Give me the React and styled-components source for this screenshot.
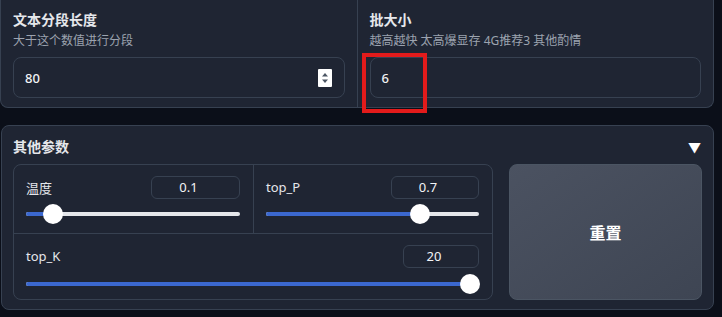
import React from 'react';
import styled, { createGlobalStyle } from 'styled-components';

const GlobalStyle = createGlobalStyle`
  html, body {
    margin: 0;
    padding: 0;
    background: #0b0f19;
  }
  body {
    font-family: "Noto Sans", "Noto Sans CJK SC", sans-serif;
    color: #e5e7eb;
  }
`;

const Page = styled.div`
  position: relative;
  width: 722px;
  height: 317px;
  overflow: hidden;
  display: flex;
  flex-direction: column;
  gap: 17px;
`;

const TopRow = styled.div`
  display: flex;
  width: 714px;
  height: 108px;
  box-sizing: border-box;
  background: #1f2533;
  border: 1px solid #374151;
  border-top: none;
  border-radius: 0 0 8px 8px;
  overflow: hidden;
`;

const Field = styled.div`
  flex: 1;
  padding: 10px 12px 0 12px;
  box-sizing: border-box;
  border-left: ${(p) => (p.$first ? 'none' : '1px solid #374151')};
`;

const Title = styled.div`
  font-size: 14px;
  font-weight: 600;
  line-height: 20px;
  color: #e5e7eb;
`;

const Hint = styled.div`
  font-size: 12px;
  line-height: 17px;
  color: #9ca3af;
  margin-top: 2px;
`;

const InputBox = styled.div`
  margin-top: 8px;
  height: 41px;
  box-sizing: border-box;
  border: 1px solid #374151;
  border-radius: 8px;
  display: flex;
  align-items: center;
  justify-content: space-between;
  padding: 0 12px 0 11px;
  font-size: 13px;
  font-weight: 500;
  color: #f3f4f6;
`;

const Spinner = styled.svg`
  display: block;
`;

const Panel = styled.div`
  margin-left: 1px;
  width: 713px;
  height: 185px;
  box-sizing: border-box;
  background: #1f2533;
  border: 1px solid #374151;
  border-radius: 8px;
  padding: 10px 11px 9px 11px;
  display: flex;
  flex-direction: column;
  gap: 8px;
`;

const PanelHead = styled.div`
  display: flex;
  justify-content: space-between;
  align-items: center;
  height: 20px;
  font-size: 14px;
  font-weight: 600;
  color: #e5e7eb;
`;

const Caret = styled.span`
  font-size: 13px;
  color: #ffffff;
  margin-right: 1px;
`;

const PanelBody = styled.div`
  display: flex;
  gap: 16px;
  flex: 1;
`;

const Group = styled.div`
  width: 480px;
  box-sizing: border-box;
  border: 1px solid #374151;
  border-radius: 8px;
  display: grid;
  grid-template-columns: 239px 1fr;
  grid-template-rows: 68px 1fr;
  overflow: hidden;
`;

const Cell = styled.div`
  grid-column: ${(p) => (p.$wide ? '1 / span 2' : 'auto')};
  padding: 10px 13px 0 12px;
  border-left: ${(p) => (p.$divide ? '1px solid #374151' : 'none')};
  border-top: ${(p) => (p.$wide ? '1px solid #374151' : 'none')};
  box-sizing: border-box;
`;

const CellHead = styled.div`
  display: flex;
  justify-content: space-between;
  align-items: center;
  height: 24px;
`;

const Label = styled.span`
  font-size: 13px;
  color: #e5e7eb;
`;

const NumBox = styled.div`
  width: ${(p) => p.$w}px;
  height: 23px;
  box-sizing: border-box;
  border: 1px solid #374151;
  border-radius: 6px;
  display: flex;
  align-items: center;
  justify-content: center;
  padding-right: 14px;
  font-size: 13px;
  color: #f3f4f6;
`;

const Slider = styled.div`
  position: relative;
  height: 20px;
  margin-top: ${(p) => p.$top}px;
`;

const Track = styled.div`
  position: absolute;
  left: 0;
  right: 0;
  top: 8px;
  height: 4px;
  border-radius: 2px;
  background: #e5e7eb;
  overflow: hidden;
`;

const Fill = styled.div`
  height: 100%;
  background: #3b68cf;
`;

const Thumb = styled.div`
  position: absolute;
  top: 0;
  width: 20px;
  height: 20px;
  margin-left: -10px;
  border-radius: 50%;
  background: #ffffff;
`;

const ResetButton = styled.button`
  flex: 1;
  border: 1px solid #4b5563;
  border-radius: 8px;
  background: linear-gradient(to right bottom, #4b5261, #3e4553);
  color: #ffffff;
  font-family: inherit;
  font-size: 16px;
  font-weight: 700;
  cursor: pointer;
`;

const Annotation = styled.div`
  position: absolute;
  left: 362px;
  top: 53px;
  width: 65px;
  height: 60px;
  box-sizing: border-box;
  border: 4px solid #e31b1b;
  pointer-events: none;
`;

function RangeSlider({ pct, top }) {
  return (
    <Slider $top={top}>
      <Track>
        <Fill style={{ width: `${pct}%` }} />
      </Track>
      <Thumb style={{ left: `${pct}%` }} />
    </Slider>
  );
}

const params = [
  { label: '温度', value: '0.1', pct: 12.6, box: 89 },
  { label: 'top_P', value: '0.7', pct: 72.4, box: 88, divide: true },
  { label: 'top_K', value: '20', pct: 98, box: 76, wide: true },
];

export default function App() {
  return (
    <>
      <GlobalStyle />
      <Page>
        <TopRow>
          <Field $first>
            <Title>文本分段长度</Title>
            <Hint>大于这个数值进行分段</Hint>
            <InputBox>
              <span>80</span>
              <Spinner width="14" height="18" viewBox="0 0 14 18">
                <rect width="14" height="18" rx="1" fill="#ffffff" />
                <path d="M4 7.5 L7 4 L10 7.5 Z" fill="#4b5563" />
                <path d="M4 10.5 L7 14 L10 10.5 Z" fill="#4b5563" />
              </Spinner>
            </InputBox>
          </Field>
          <Field>
            <Title>批大小</Title>
            <Hint>越高越快 太高爆显存 4G推荐3 其他酌情</Hint>
            <InputBox>
              <span>6</span>
            </InputBox>
          </Field>
        </TopRow>

        <Panel>
          <PanelHead>
            <span>其他参数</span>
            <Caret>▼</Caret>
          </PanelHead>
          <PanelBody>
            <Group>
              {params.map((p) => (
                <Cell key={p.label} $wide={p.wide} $divide={p.divide}>
                  <CellHead>
                    <Label>{p.label}</Label>
                    <NumBox $w={p.box}>{p.value}</NumBox>
                  </CellHead>
                  <RangeSlider pct={p.pct} top={p.wide ? 6 : 5} />
                </Cell>
              ))}
            </Group>
            <ResetButton>重置</ResetButton>
          </PanelBody>
        </Panel>

        <Annotation />
      </Page>
    </>
  );
}
